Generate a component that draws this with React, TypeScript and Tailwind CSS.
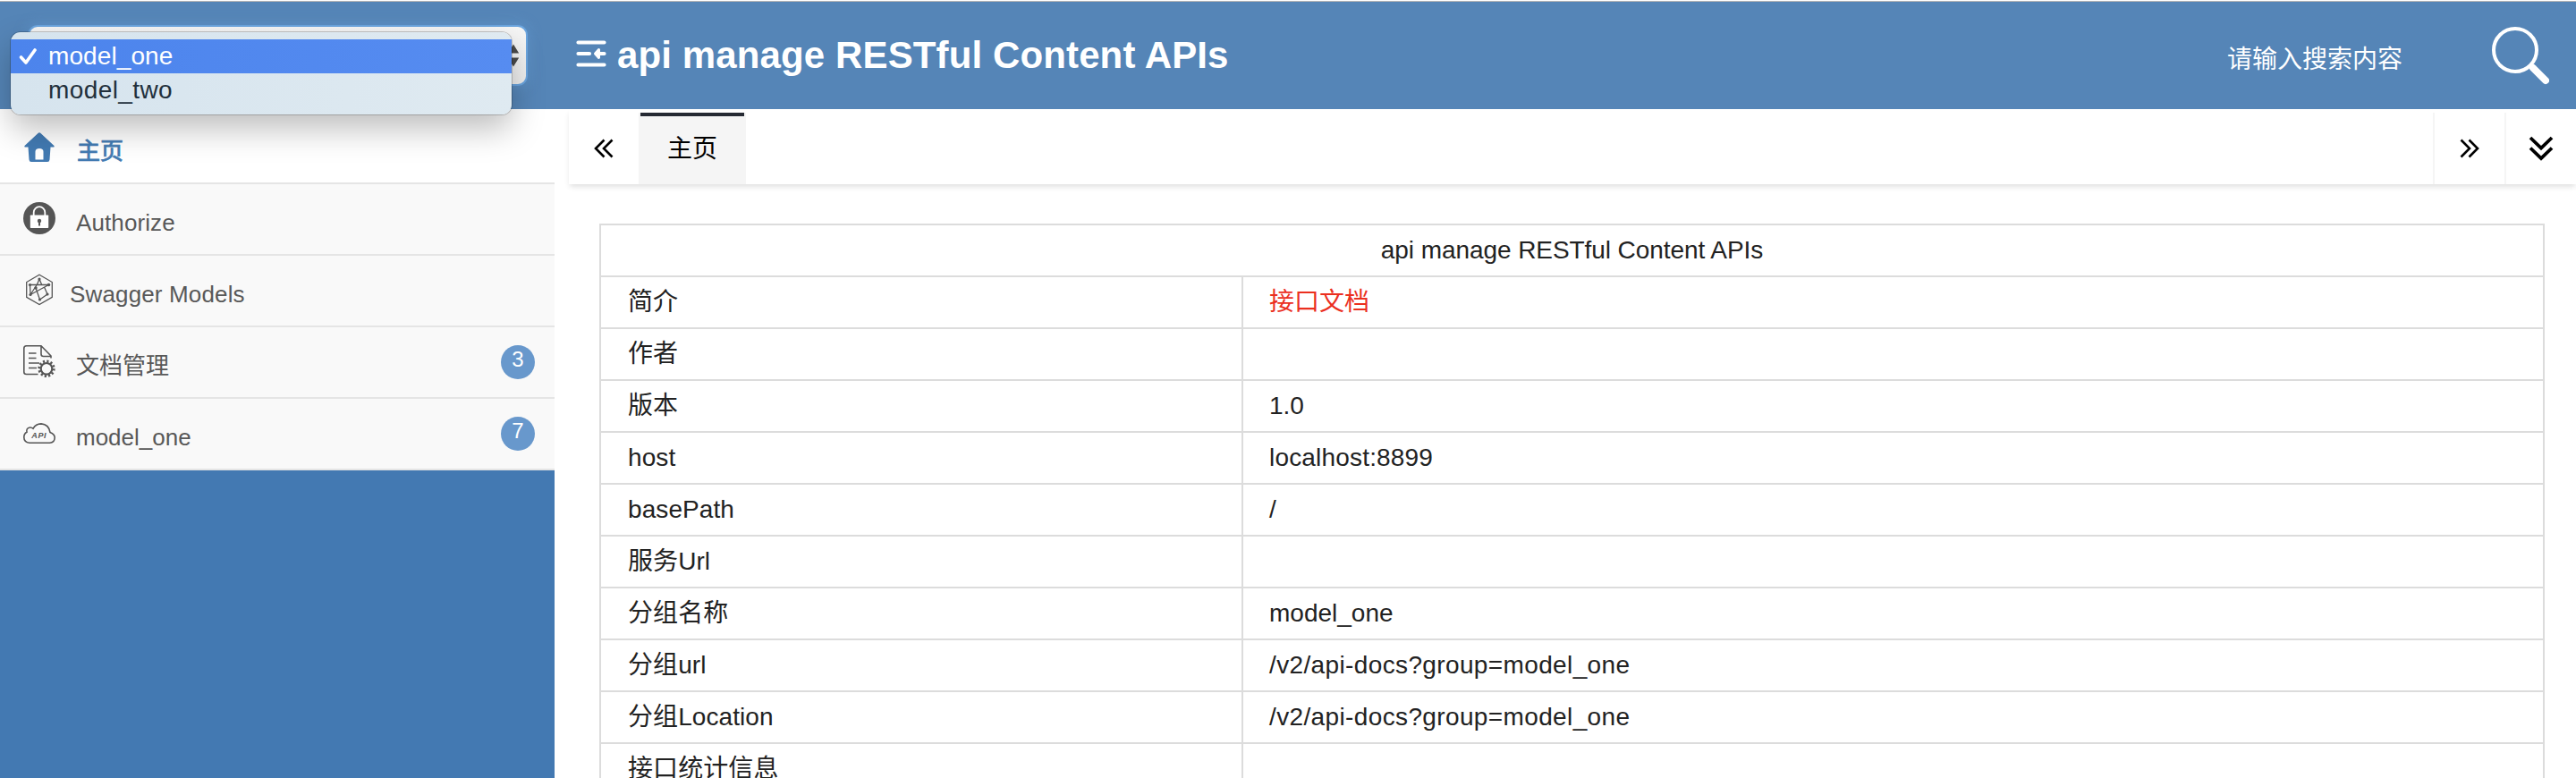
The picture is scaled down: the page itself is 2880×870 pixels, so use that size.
import React from "react";

const rows: { name: string; value: string; style?: string }[] = [
  { name: "简介", value: "接口文档", style: "text-[#eb2f1f]" },
  { name: "作者", value: "" },
  { name: "版本", value: "1.0" },
  { name: "host", value: "localhost:8899", style: "tracking-[0.18px]" },
  { name: "basePath", value: "/" },
  { name: "服务Url", value: "" },
  { name: "分组名称", value: "model_one" },
  { name: "分组url", value: "/v2/api-docs?group=model_one", style: "tracking-[0.37px]" },
  { name: "分组Location", value: "/v2/api-docs?group=model_one", style: "tracking-[0.37px]" },
  { name: "接口统计信息", value: "" },
];

function HomeIcon() {
  return (
    <svg className="h-[34px] w-[34px]" viewBox="0 0 34 34" fill="#427ab2">
      <path d="M15.500 1 Q17 -0.500 18.500 1 L33.500 15 Q34 16.500 32.500 16.500 H29.500 L28.500 30.500 Q28.300 33 26 33 H8 Q5.700 33 5.500 30.500 L4.500 16.500 H1.500 Q0 16.500 0.500 15 Z" />
      <path d="M12.500 30.500 V21.500 Q12.500 18 17 18 Q21.500 18 21.500 21.500 V30.500 Z" fill="#fff" />
    </svg>
  );
}

function LockIcon() {
  return (
    <svg className="h-[36px] w-[36px]" viewBox="0 0 36 36">
      <circle cx="18" cy="18" r="18" fill="#555" />
      <path d="M11.700 15 V11.500 a6.300 6.300 0 0 1 12.600 0 V15" fill="none" stroke="#fff" strokeWidth="1.8" />
      <rect x="7.800" y="14.500" width="20.400" height="14.500" rx="0.8" fill="#fff" />
      <circle cx="18" cy="21" r="2.200" fill="#555" />
      <rect x="17" y="21" width="2" height="5.500" fill="#555" />
    </svg>
  );
}

function ModelsIcon() {
  return (
    <svg className="h-[36px] w-[36px]" viewBox="0 0 36 36" fill="none" stroke="#555" strokeWidth="1.3">
      <path d="M18 1.200 L32.300 9.500 V26.300 L18 34.600 L3.700 26.300 V9.500 Z" />
      <path d="M18 6 L15.500 12 M18 6 L20.500 12 M7.500 12.500 H28.500 L8 23.500 L7.500 12.500 M15.500 12 L8 23.500 M14 16 L18.500 29 L27 23 L23.500 15" />
      <g fill="#555" stroke="none">
        <circle cx="18" cy="6" r="1.600" />
        <circle cx="7.500" cy="12.500" r="1.600" />
        <circle cx="28.500" cy="12.500" r="1.800" />
        <circle cx="8" cy="23.500" r="1.600" />
        <circle cx="27" cy="23" r="1.600" />
        <circle cx="18.500" cy="29" r="1.600" />
        <circle cx="14" cy="16" r="1.700" />
      </g>
    </svg>
  );
}

function DocIcon() {
  return (
    <svg className="h-[36px] w-[36px]" viewBox="0 0 36 36" fill="none" stroke="#555" strokeWidth="1.6">
      <path d="M16.500 32.500 H3.500 Q0.800 32.500 0.800 30 V3.500 Q0.800 0.800 3.500 0.800 H20 L31 12 V14.500 M20 0.800 V10 Q20 12.500 22.500 12.500 H30.500" />
      <path d="M6 9 H14.500 M6 14.500 H14.500 M6 20 H18 M6 25.500 H15" />
      <circle cx="26" cy="26.300" r="6.300" strokeWidth="2.200" />
      <circle cx="26" cy="26.300" r="8.300" strokeWidth="2.800" strokeDasharray="2.173 2.173" />
    </svg>
  );
}

function ApiIcon() {
  return (
    <svg className="h-[24px] w-[36px]" viewBox="0 0 36 24">
      <path
        d="M7 22.300 Q0.800 21.500 0.800 16 Q0.800 12 4 10.300 Q3 5.500 7.500 5 Q9.500 4.800 11 6.300 Q14 1 20 0.900 Q28.500 1.500 30 10.500 Q35.200 12.500 35.200 16.500 Q35 21.800 29.500 22.300 Z"
        fill="none"
        stroke="#555"
        strokeWidth="1.6"
      />
      <text x="9.300" y="16.600" fontSize="9" fontStyle="italic" fontWeight="bold" fontFamily="Liberation Sans" letterSpacing="0.6" fill="#555">
        API
      </text>
    </svg>
  );
}

function MenuFoldIcon() {
  return (
    <svg className="h-[32px] w-[34px]" viewBox="0 0 34 32" fill="none" stroke="#fff" strokeWidth="4.200" strokeLinecap="round">
      <path d="M2.500 3.500 H31.500 M2.500 16 H15 M2.500 28.500 H31.500" />
      <path d="M23 16 H31.500" />
      <path d="M25.500 11.500 L21.500 16 L25.500 20.500 Z" fill="#fff" strokeWidth="3" strokeLinejoin="round" />
    </svg>
  );
}

function SearchIcon() {
  return (
    <svg className="h-[66px] w-[66px]" viewBox="0 0 66 66" fill="none" stroke="#fff">
      <circle cx="28" cy="27" r="24" strokeWidth="4" />
      <path d="M44 43 L50 49" strokeWidth="6" />
      <path d="M48 47 L62 61" strokeWidth="8" strokeLinecap="round" />
    </svg>
  );
}

type ItemProps = {
  icon: React.ReactNode;
  children: React.ReactNode;
  count?: number;
};

function Item({ icon, children, count }: ItemProps) {
  return (
    <div className="flex h-20 items-center border-b-2 border-[#e5e5e5] bg-[#f9f9f9] pr-[22px] pl-[26px] text-[26px] text-[#585858]">
      <div className="flex w-9 justify-center pb-[2px]">{icon}</div>
      {children}
      {count !== undefined && (
        <span className="ml-auto h-[38px] w-[38px] rounded-full bg-[#6898cc] text-center text-[24px] leading-[31px] text-white">
          {count}
        </span>
      )}
    </div>
  );
}

export default function App() {
  return (
    <div className="h-[870px] w-[2880px] overflow-hidden bg-white font-['Liberation_Sans','Noto_Sans_CJK_SC',sans-serif] text-[28px] text-[#222]">
      <div className="h-px bg-white" />
      <header className="relative flex h-[121px] border-t border-[#b5b5b5] bg-[#5585b7]">
        <div className="mt-[26px] ml-[31px] flex h-[68px] w-[559px] shrink-0 items-center justify-end rounded-[11px] border-2 border-[#6ba5df] bg-linear-to-b from-[#f6f6f6] to-[#eeeeee] pr-[7px] shadow-[0_0_14px_2px_rgba(107,165,223,0.4)]">
          <svg className="h-[26px] w-[14px]" viewBox="0 0 14 26" fill="#4a4a4a">
            <path d="M7 0.500 L13.200 10.500 H0.800 Z M7 25.500 L13.200 15.500 H0.800 Z" />
          </svg>
        </div>
        <div className="mt-[42px] ml-[54px]">
          <MenuFoldIcon />
        </div>
        <h3 className="mt-[35px] ml-[12px] text-[42px] leading-[50px] font-bold tracking-[0.12px] whitespace-nowrap text-white">
          api manage RESTful Content APIs
        </h3>
        <div className="mt-[45px] ml-auto w-[294px] text-[28px] leading-[40px] text-white">请输入搜索内容</div>
        <div className="mt-[27px] mr-[30px]">
          <SearchIcon />
        </div>

        <ul className="absolute top-[34px] left-[12px] z-10 h-[92px] w-[560px] rounded-[11px] bg-linear-to-r from-[#d6e4ee] to-[#dfeaf1] pt-[8px] leading-[38px] text-[#22303c] shadow-[0_0_0_1px_rgba(0,0,0,0.2),0_16px_36px_rgba(0,0,0,0.26)]">
          <li className="flex h-[38px] items-center bg-linear-to-r from-[#4c84ec] to-[#568cf1] text-white">
            <svg className="ml-[9px] h-[20px] w-[21px]" viewBox="0 0 21 20" fill="none" stroke="#fff" strokeWidth="3.600" strokeLinecap="round" strokeLinejoin="round">
              <path d="M2.500 11 L8 17 L18 3" />
            </svg>
            <span className="ml-[12px] tracking-[0.1px]">model_one</span>
          </li>
          <li className="flex h-[38px] items-center pl-[42px] tracking-[0.4px]">model_two</li>
        </ul>
      </header>

      <div className="flex h-[748px]">
        <aside className="w-[620px] shrink-0 bg-[#4379b2]">
          <div className="flex h-[84px] items-center border-b-2 border-[#e5e5e5] bg-white pt-[3px] pl-[27px] text-[26px] text-[#427ab2]">
            <HomeIcon />
            <span className="ml-[25px] pt-[10px] [-webkit-text-stroke:0.8px_#427ab2]">主页</span>
          </div>
          <Item icon={<LockIcon />}>
            <span className="pt-[8px] pl-[23px] tracking-[0.1px]">Authorize</span>
          </Item>
          <Item icon={<ModelsIcon />}>
            <span className="pt-[8px] pl-[16px] tracking-[0.15px]">Swagger Models</span>
          </Item>
          <Item icon={<DocIcon />} count={3}>
            <span className="pt-[8px] pl-[23px]">文档管理</span>
          </Item>
          <Item
            icon={
              <div className="pt-[2px]">
                <ApiIcon />
              </div>
            }
            count={7}
          >
            <span className="pt-[8px] pl-[23px]">model_one</span>
          </Item>
        </aside>

        <main className="flex min-w-0 flex-1 flex-col pl-[16px]">
          <nav className="flex h-[84px] shrink-0 pt-[4px] text-black shadow-[0_4px_6px_-1px_rgba(0,0,0,0.12)]">
            <button className="flex w-[78px] items-center justify-center">
              <svg className="h-[22px] w-[22px]" viewBox="0 0 22 22" fill="none" stroke="#000" strokeWidth="2.600">
                <path d="M11.500 1.500 L2 11 L11.500 20.500 M20.500 1.500 L11 11 L20.500 20.500" />
              </svg>
            </button>
            <div className="h-[80px] w-[120px] bg-[#f5f5f5] px-[2px]">
              <div className="h-[76px] border-t-4 border-[#262a33] pt-[16px] text-center leading-[42px]">主页</div>
            </div>
            <button className="ml-auto flex w-[80px] items-center justify-center border-l-2 border-[#f5f5f5]">
              <svg className="h-[22px] w-[22px]" viewBox="0 0 22 22" fill="none" stroke="#000" strokeWidth="2.600">
                <path d="M1.500 1.500 L11 11 L1.500 20.500 M10.500 1.500 L20 11 L10.500 20.500" />
              </svg>
            </button>
            <button className="flex w-[80px] items-center justify-center border-l-2 border-[#f5f5f5]">
              <svg className="h-[28px] w-[28px]" viewBox="0 0 28 28" fill="none" stroke="#000" strokeWidth="3.800">
                <path d="M2 2 L14 13.500 L26 2 M2 13.500 L14 25 L26 13.500" />
              </svg>
            </button>
          </nav>

          <div className="mt-[44px] mr-[35px] ml-[34px] border-2 border-[#dcdcdc]">
            <div className="h-[56px] text-center leading-[56px] tracking-[-0.07px]">api manage RESTful Content APIs</div>
            {rows.map((row) => (
              <div key={row.name} className="flex h-[58px] border-t-2 border-[#dcdcdc] leading-[56px]">
                <div className="w-[718px] border-r-2 border-[#dcdcdc] pl-[30px] tracking-[0.08px]">{row.name}</div>
                <div className="flex-1 pl-[29px]">
                  <span className={row.style}>{row.value}</span>
                </div>
              </div>
            ))}
          </div>
        </main>
      </div>
    </div>
  );
}
